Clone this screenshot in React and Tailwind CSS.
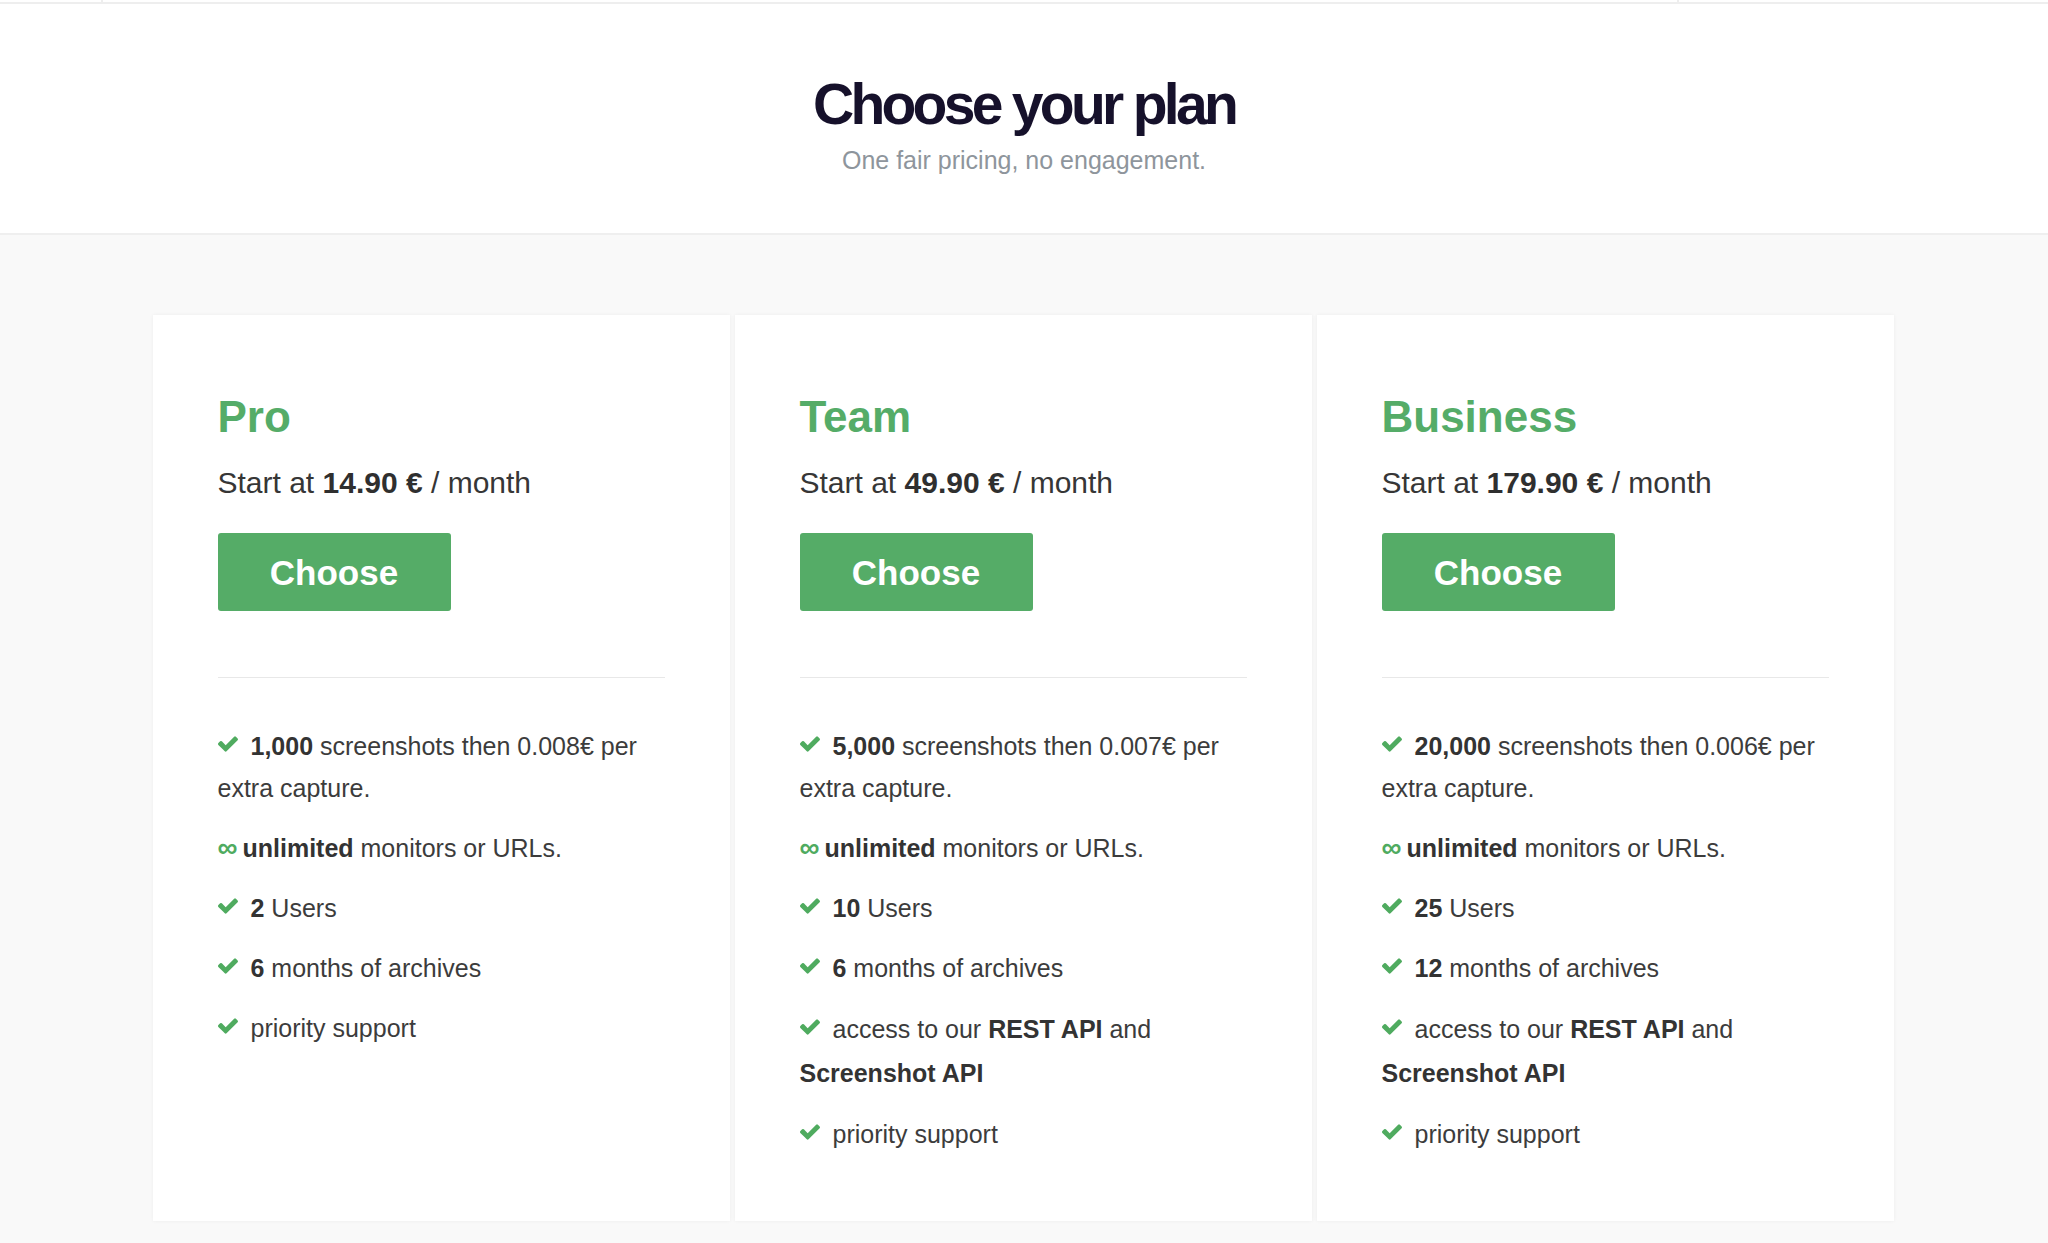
import React from "react";

function Check() {
  return (
    <svg
      viewBox="121 334 1550 1188"
      width="20"
      height="16"
      className="inline-block mr-[13px] align-[3px]"
      fill="#4fab5f"
    >
      <path d="M1671 566q0 40-28 68l-724 724-136 136q-28 28-68 28t-68-28l-136-136-362-362q-28-28-28-68t28-68l136-136q28-28 68-28t68 28l294 295 656-657q28-28 68-28t68 28l136 136q28 28 28 68z" />
    </svg>
  );
}

function Infinity() {
  return (
    <span className="font-bold text-[28px] leading-[0] text-[#4fab5f] mr-[5px]">∞</span>
  );
}

const plans = [
  {
    name: "Pro",
    price: "14.90 €",
    shots: "1,000",
    extra: "0.008€",
    users: "2",
    months: "6",
    api: false,
  },
  {
    name: "Team",
    price: "49.90 €",
    shots: "5,000",
    extra: "0.007€",
    users: "10",
    months: "6",
    api: true,
  },
  {
    name: "Business",
    price: "179.90 €",
    shots: "20,000",
    extra: "0.006€",
    users: "25",
    months: "12",
    api: true,
  },
];

function Card({ plan }) {
  return (
    <div className="w-[577px] h-[906px] bg-white shadow-[0_0_4px_rgba(0,0,0,0.05)] pt-[78px] px-[65px]">
      <div className="text-[44px] leading-[48px] font-bold text-[#55ac68]">
        {plan.name}
      </div>
      <div className="mt-[24px] text-[30px] leading-[36px] text-[#363636]">
        Start at <span className="font-bold text-[#2f2f2f]">{plan.price}</span> / month
      </div>
      <button className="mt-[32px] w-[233px] h-[78px] rounded-[3px] bg-[#55ac67] text-white text-[35px] font-bold leading-none flex items-center justify-center">
        Choose
      </button>
      <div className="mt-[66px] h-px bg-[#e8e8e8] w-[447px]" />
      <ul className="mt-[47px] text-[25px] leading-[42px] text-[#3c3c3c]">
        <li className="mb-[18px]">
          <Check />
          <span className="font-bold text-[#333]">{plan.shots}</span> screenshots then {plan.extra} per extra capture.
        </li>
        <li className="mb-[18px]">
          <Infinity />
          <span className="font-bold text-[#333]">unlimited</span> monitors or URLs.
        </li>
        <li className="mb-[18px]">
          <Check />
          <span className="font-bold text-[#333]">{plan.users}</span> Users
        </li>
        <li className="mb-[18px]">
          <Check />
          <span className="font-bold text-[#333]">{plan.months}</span> months of archives
        </li>
        {plan.api && (
          <li className="mb-[18px] leading-[44px]">
            <Check />
            access to our <span className="font-bold text-[#333]">REST API</span> and{" "}
            <span className="font-bold text-[#333]">Screenshot API</span>
          </li>
        )}
        <li className="mb-[18px]">
          <Check />
          priority support
        </li>
      </ul>
    </div>
  );
}

export default function App() {
  return (
    <div
      className="min-h-screen bg-[#f9f9f9]"
      style={{ fontFamily: '"Liberation Sans", Arial, Helvetica, sans-serif' }}
    >
      <div className="bg-white">
        <div className="flex h-[2px]">
          <div className="w-[101px]" />
          <div className="w-[2px] bg-[#eeeeee]" />
          <div className="flex-1" />
          <div className="w-[2px] bg-[#eeeeee]" />
          <div className="w-[369px]" />
        </div>
        <div className="h-[2px] bg-[#eeeeee]" />
        <header className="pt-[72px] pb-[58px] border-b-2 border-[#efefef] text-center">
          <h1 className="text-[57px] leading-[56px] font-bold tracking-[-0.065em] text-[#16112b]">
            Choose your plan
          </h1>
          <p className="mt-[13px] text-[25px] leading-[30px] text-[#8e959c]">
            One fair pricing, no engagement.
          </p>
        </header>
      </div>
      <main className="pt-[80px] pb-[22px] pr-[2px] flex justify-center gap-[5px]">
        {plans.map((p) => (
          <Card key={p.name} plan={p} />
        ))}
      </main>
    </div>
  );
}
